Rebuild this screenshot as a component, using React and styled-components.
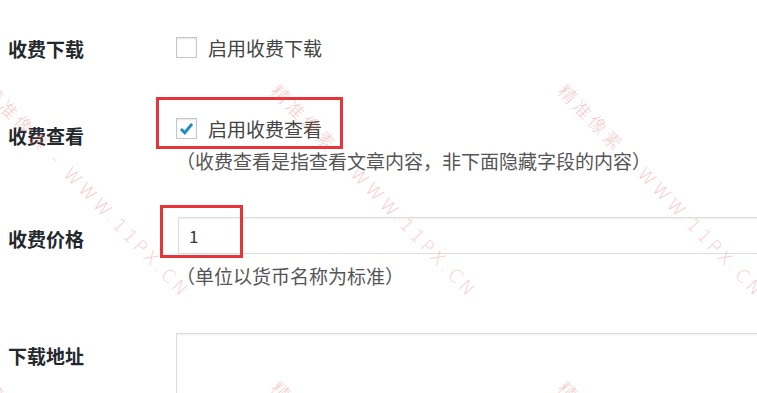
import React from 'react';
import styled, { createGlobalStyle } from 'styled-components';

const GlobalStyle = createGlobalStyle`
    html, body {
        margin: 0;
        padding: 0;
        background: #fff;
        overflow: hidden;
    }
`;

const Page = styled.div`
    position: relative;
    width: 757px;
    height: 393px;
    overflow: hidden;
    box-sizing: border-box;
    padding-left: 8px;
    background: #fff;
    font-family: "Noto Sans CJK SC", "Liberation Sans", sans-serif;
`;

const Row = styled.div`
    display: grid;
    grid-template-columns: 168px 1fr;
    padding-top: ${p => p.$top}px;
`;

const Label = styled.div`
    padding-top: ${p => p.$offset}px;
    font-size: 19px;
    line-height: 26px;
    font-weight: 700;
    color: #23282d;
    white-space: nowrap;
`;

const Field = styled.div`
    min-width: 0;
`;

const OptionLine = styled.label`
    position: relative;
    display: flex;
    align-items: center;
    height: 26px;
    font-size: 19px;
    color: #444;
    white-space: nowrap;
`;

const Box = styled.span`
    display: inline-flex;
    align-items: center;
    justify-content: center;
    width: 21px;
    height: 21px;
    box-sizing: border-box;
    margin-right: 11px;
    border: 1px solid #c4c6c9;
    background: #fff;
    box-shadow: inset 0 1px 2px rgba(0, 0, 0, .1);
`;

const Description = styled.p`
    margin: ${p => p.$gap}px 0 0;
    font-size: 19px;
    line-height: 26px;
    color: #555;
    white-space: nowrap;
`;

const InputWrap = styled.div`
    position: relative;
    margin-left: 2px;
`;

const TextInput = styled.div`
    width: 640px;
    height: 37px;
    box-sizing: border-box;
    padding-left: 10px;
    display: flex;
    align-items: center;
    border: 1px solid #ddd;
    box-shadow: inset 0 1px 2px rgba(0, 0, 0, .07);
    font-size: 17px;
    color: #32373c;
`;

const TextArea = styled.div`
    width: 640px;
    height: 120px;
    box-sizing: border-box;
    border: 1px solid #ddd;
    box-shadow: inset 0 1px 2px rgba(0, 0, 0, .07);
`;

const Highlight = styled.span`
    position: absolute;
    left: ${p => p.$left}px;
    top: ${p => p.$top}px;
    width: ${p => p.$width}px;
    height: ${p => p.$height}px;
    box-sizing: border-box;
    border: 3px solid #e8333a;
    pointer-events: none;
`;

const Watermarks = styled.div`
    position: absolute;
    inset: 0;
    pointer-events: none;
    overflow: hidden;
`;

const Mark = styled.span`
    position: absolute;
    left: ${p => p.$x}px;
    top: ${p => p.$y}px;
    transform: rotate(46deg);
    transform-origin: 0 50%;
    font-family: "DejaVu Sans", "Noto Sans CJK SC", sans-serif;
    font-weight: 200;
    font-size: 18px;
    line-height: 22px;
    letter-spacing: 3.5px;
    color: rgba(232, 80, 80, .32);
    white-space: nowrap;
`;

const Check = () => (
    <svg width="17" height="17" viewBox="0 0 20 20">
        <path d="M3.5 10.5 L8 15 L16.5 4.5" fill="none" stroke="#1e8cbe" strokeWidth="3.4" strokeLinejoin="miter" strokeLinecap="butt" />
    </svg>
);

const markCols = [-13, 274, 561];
const markRows = [-220, 77, 374];

const App = () => {
    return (
        <>
            <GlobalStyle />
            <Page>
                <Row $top={34}>
                    <Label $offset={2}>收费下载</Label>
                    <Field>
                        <OptionLine>
                            <Box />
                            启用收费下载
                        </OptionLine>
                    </Field>
                </Row>
                <Row $top={53}>
                    <Label $offset={8}>收费查看</Label>
                    <Field>
                        <OptionLine>
                            <Box><Check /></Box>
                            启用收费查看
                            <Highlight $left={-20} $top={-18} $width={187} $height={52} />
                        </OptionLine>
                        <Description $gap={7}>（收费查看是指查看文章内容，非下面隐藏字段的内容）</Description>
                    </Field>
                </Row>
                <Row $top={43}>
                    <Label $offset={9}>收费价格</Label>
                    <Field>
                        <InputWrap>
                            <TextInput>1</TextInput>
                            <Highlight $left={-18} $top={-12} $width={83} $height={53} />
                        </InputWrap>
                        <Description $gap={9}>（单位以货币名称为标准）</Description>
                    </Field>
                </Row>
                <Row $top={44}>
                    <Label $offset={10}>下载地址</Label>
                    <Field>
                        <TextArea />
                    </Field>
                </Row>
                <Watermarks>
                    {markRows.map(y => markCols.map(x => (
                        <Mark key={`${x}-${y}`} $x={x} $y={y}>精准像素 - WWW.11PX.CN</Mark>
                    )))}
                </Watermarks>
            </Page>
        </>
    );
};

export default App;
